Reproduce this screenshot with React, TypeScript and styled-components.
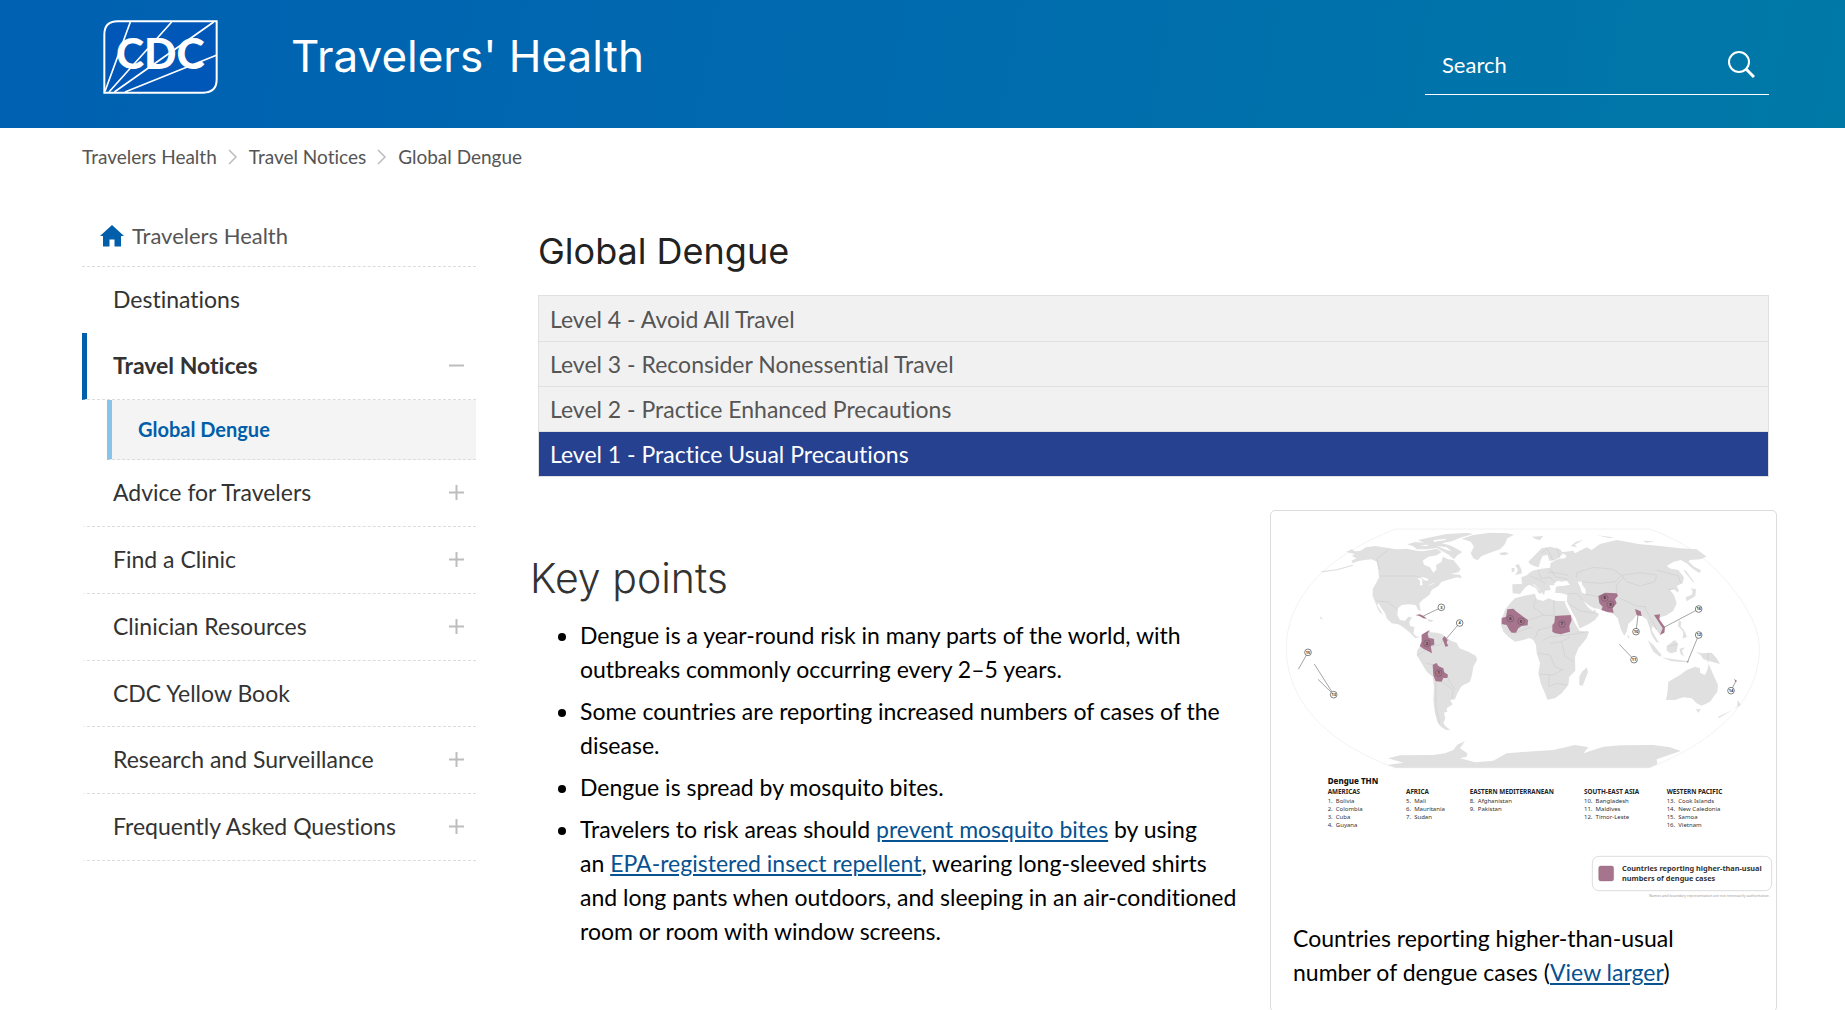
import React from "react";
import styled, { createGlobalStyle } from "styled-components";

const bodyFont = `Lato, "Noto Sans", sans-serif`;
const headFont = `Inter, "Open Sans", sans-serif`;

const GlobalStyle = createGlobalStyle`
  *, *::before, *::after { box-sizing: border-box; }
  body { margin: 0; background: #fff; color: #000; font-family: ${bodyFont}; font-size: 23px; line-height: 34px; font-variant-ligatures: none; }
  button, input { font: inherit; color: inherit; background: none; border: 0; padding: 0; margin: 0; }
  a { color: inherit; text-decoration: none; }
  ul, ol { list-style: none; margin: 0; padding: 0; }
`;

const Header = styled.header`
  display: flex;
  align-items: flex-start;
  height: 128px;
  padding: 20px 76px 0 103px;
  color: #fff;
  background: linear-gradient(100deg, #0060b2 0%, #006bae 50%, #0079a7 100%);
`;
const LogoLink = styled.a`
  display: block;
  width: 115px;
  height: 74px;
  svg { display: block; }
`;
const SiteTitle = styled.a`
  margin-left: 73px;
  font-family: ${headFont};
  font-size: 44px;
  line-height: 72px;
`;
const SearchForm = styled.form`
  display: flex;
  align-items: center;
  width: 344px;
  height: 60px;
  margin: 15px 0 0 auto;
  padding: 0 14px 0 17px;
  border-bottom: 1px solid #fff;
  font-size: 22px;
`;
const SearchInput = styled.input`
  flex: 1;
  min-width: 0;
  outline: 0;
  &::placeholder { color: #fff; opacity: 1; }
`;
const IconButton = styled.button`
  display: flex;
  align-items: center;
  cursor: pointer;
`;

const Crumbs = styled.ol`
  display: flex;
  align-items: center;
  gap: 11px;
  padding: 15px 82px 0;
  font-size: 19px;
  line-height: 28px;
  color: #555;
  li { display: flex; align-items: center; gap: 11px; }
`;

const Page = styled.div`
  display: grid;
  grid-template-columns: 394px minmax(0, 1fr);
  gap: 54px;
  padding: 34px 68px 0 82px;
`;

const HomeLink = styled.a`
  display: flex;
  align-items: center;
  gap: 8px;
  height: 62px;
  padding-left: 18px;
  border-bottom: 1px dashed #dcdcdc;
  color: #555;
  font-size: 22px;
`;
const NavRow = styled.li<{ $active?: boolean; $short?: boolean; $plain?: boolean }>`
  display: flex;
  align-items: center;
  justify-content: space-between;
  height: ${(p) => (p.$short ? 66 : 67)}px;
  padding: 0 12px 2px 26px;
  border-left: 5px solid ${(p) => (p.$active ? "#005eaa" : "transparent")};
  border-bottom: ${(p) => (p.$plain ? "0" : "1px dashed #dcdcdc")};
  color: #333;
  font-weight: ${(p) => (p.$active ? 700 : 400)};
`;
const SubRow = styled.li`
  height: 60px;
  margin-left: 25px;
  padding-left: 26px;
  border-left: 5px solid #88c3ea;
  border-bottom: 1px dashed #dcdcdc;
  background: #f4f4f4;
  color: #005eaa;
  font-size: 20px;
  font-weight: 700;
  line-height: 58px;
`;

const Intro = styled.div`
  padding: 22px 8px 0;
`;
const PageTitle = styled.h1`
  margin: 0 0 20px;
  font-family: ${headFont};
  font-size: 36px;
  font-weight: 400;
  line-height: 48px;
  color: #222;
`;
const Levels = styled.ul`
  padding-top: 1px;
  border: 1px solid #e0e0e0;
  background: #f1f1f1;
`;
const Level = styled.li<{ $current?: boolean }>`
  padding-left: 11px;
  line-height: 44px;
  border-bottom: ${(p) => (p.$current ? "0" : "1px solid #e0e0e0")};
  background: ${(p) => (p.$current ? "#26418f" : "#f1f1f1")};
  color: ${(p) => (p.$current ? "#fff" : "#555")};
`;

const Columns = styled.div`
  display: grid;
  grid-template-columns: minmax(0, 1fr) 507px;
  gap: 24px;
  align-items: start;
  margin-top: 33px;
`;
const KeyPoints = styled.section`
  padding-top: 40px;
`;
const SectionTitle = styled.h2`
  margin: 0 0 12px;
  font-family: ${headFont};
  font-size: 41px;
  font-weight: 300;
  line-height: 56px;
  color: #333;
`;
const Points = styled.ul`
  list-style: disc;
  padding-left: 50px;
  li { margin-bottom: 8px; }
`;
const TextLink = styled.a`
  color: #075290;
  text-decoration: underline;
`;
const MapCard = styled.figure`
  margin: 0;
  border: 1px solid #dcdcdc;
  border-radius: 5px;
  svg { display: block; width: 100%; height: auto; }
`;
const Caption = styled.figcaption`
  padding: 12px 40px 22px 22px;
`;

const Logo = () => (
  <svg width="115" height="74" viewBox="0 0 345 222" role="img" aria-label="CDC">
    <path d="M4 218V44Q4 4 44 4H341V178Q341 218 301 218Z" fill="#0057b8" stroke="#fff" strokeWidth="6" />
    <path d="M6 214L82 6M18 216L206 6M34 216L332 6M66 216L340 106" stroke="#fff" strokeWidth="5" fill="none" />
    <text x="39" y="147" fontFamily="Lato, sans-serif" fontSize="128" fontWeight="900" fill="#fff">CDC</text>
  </svg>
);
const SearchIcon = () => (
  <svg width="27" height="27" viewBox="0 0 27 27" fill="none" stroke="#fff" strokeWidth="2">
    <circle cx="11" cy="11" r="10" />
    <path d="M18 18L26 26" strokeWidth="3" />
  </svg>
);
const Chevron = () => (
  <svg width="10" height="16" viewBox="0 0 10 16" fill="none" stroke="#bdbdbd" strokeWidth="1.5">
    <path d="M1 1L8 8L1 15" />
  </svg>
);
const HomeIcon = () => (
  <svg width="24" height="22" viewBox="0 0 24 22" fill="#005eaa">
    <path d="M12 0L24 11H21V21.500H14.500V14.500H9.500V21.500H3V11H0Z" />
  </svg>
);
const ToggleIcon = ({ open }: { open?: boolean }) => (
  <svg width="15" height="15" viewBox="0 0 15 15" stroke="#bdbdbd" strokeWidth="2">
    <path d={open ? "M0 7.500H15" : "M0 7.500H15M7.500 0V15"} />
  </svg>
);

type Pin = { n: number; x: number; y: number; to?: [number, number][] };
const pins: Pin[] = [
  { n: 3, x: 544, y: 352, to: [[490, 378]] },
  { n: 4, x: 599, y: 399, to: [[560, 445]] },
  { n: 2, x: 501, y: 460 },
  { n: 1, x: 536, y: 549 },
  { n: 15, x: 144, y: 487, to: [[115, 538]] },
  { n: 13, x: 221, y: 614, to: [[163, 522], [174, 568]] },
  { n: 6, x: 751, y: 386 },
  { n: 5, x: 783, y: 394 },
  { n: 7, x: 906, y: 402 },
  { n: 8, x: 1034, y: 324 },
  { n: 9, x: 1051, y: 343 },
  { n: 10, x: 1128, y: 425, to: [[1134, 375]] },
  { n: 16, x: 1316, y: 357, to: [[1212, 412]] },
  { n: 12, x: 1316, y: 435, to: [[1283, 515]] },
  { n: 11, x: 1122, y: 509, to: [[1078, 463]] },
  { n: 14, x: 1413, y: 602, to: [[1428, 572]] },
];
const regions: { x: number; name: string; items: string[] }[] = [
  { x: 170, name: "AMERICAS", items: ["1.  Bolivia", "2.  Colombia", "3.  Cuba", "4.  Guyana"] },
  { x: 405, name: "AFRICA", items: ["5.  Mali", "6.  Mauritania", "7.  Sudan"] },
  { x: 596, name: "EASTERN MEDITERRANEAN", items: ["8.  Afghanistan", "9.  Pakistan"] },
  { x: 939, name: "SOUTH-EAST ASIA", items: ["10.  Bangladesh", "11.  Maldives", "12.  Timor-Leste"] },
  { x: 1187, name: "WESTERN PACIFIC", items: ["13.  Cook Islands", "14.  New Caledonia", "15.  Samoa", "16.  Vietnam"] },
];

const WorldMap = () => (
  <svg viewBox="0 0 1515 1194" role="img" aria-label="World map of dengue cases" fontFamily='"Noto Sans", sans-serif'>
    <g transform="translate(-33 -63)">
      <path
        d="M408 117H1168C1310 165 1390 255 1440 325C1480 385 1498 430 1498 475C1498 610 1400 740 1170 833H405C160 745 79 600 79 475C79 330 190 200 408 117Z"
        fill="none" stroke="#ececec" strokeWidth="2"
      />
      <g fill="#e0e0e0">
        <path d="M258 186L275 178L285 184L300 183L318 172L345 168L385 174L410 178L440 176L470 182L490 184L510 180L530 176L545 186L530 196L505 200L488 212L492 224L510 232L520 248L530 238L528 225L545 215L548 200L565 208L580 210L590 222L602 238L595 247L572 252L600 254L606 265L590 262L570 268L545 275L535 288L515 300L508 315L490 328L478 340L482 362L474 360L468 346L450 343L425 345L414 355L412 375L420 390L435 392L445 380L456 382L448 396L450 408L464 411L460 430L470 440L484 440L466 445L450 428L430 412L415 403L395 400L380 385L375 370L362 350L354 338L352 346L362 363L369 374L358 366L350 348L345 335L338 318L338 298L348 280L357 262L355 240L350 215L335 208L315 210L295 213L278 220L274 212L290 205L276 198L284 192Z" />
        <path d="M442 163L465 156L492 158L474 150L520 140L560 132L620 129L640 132L605 142L575 154L545 160L570 166L586 174L607 186L592 196L582 208L566 194L548 184L530 174L500 178L470 178L462 170Z" />
        <path d="M605 146L640 135L690 128L742 130L762 134L742 145L735 162L720 178L690 188L665 198L652 211L640 205L632 190L642 170L632 155Z" />
        <path d="M718 189L735 186L747 190L735 196L722 195ZM503 388L520 391L515 396L505 394ZM178 378L188 385L184 389Z" />
        <path d="M180 244L230 238L278 224L280 227L232 241L190 247Z" />
        <path d="M485 435L495 428L508 420L512 427L530 428L545 432L555 440L575 453L590 458L598 475L625 485L648 498L651 510L640 530L636 555L630 575L605 588L592 610L585 628L570 630L578 643L560 655L562 665L552 668L556 685L550 700L560 712L571 719L558 720L543 710L532 695L525 670L520 630L522 590L518 560L500 545L485 520L470 495L472 480L482 468L485 450Z" />
        <path d="M765 325L790 318L825 311L830 328L850 333L865 325L885 332L915 334L920 350L935 375L945 400L958 422L987 425L980 445L955 475L945 500L946 542L928 560L925 585L905 610L885 625L862 629L855 610L842 580L835 550L840 520L830 490L828 465L820 450L808 444L790 450L765 455L745 440L730 425L723 405L726 385L735 360L750 340Z" />
        <path d="M980 532L984 546L968 587L958 585L958 560L966 545Z" />
        <path d="M757 283L786 282L784 262L800 256L812 245L825 240L845 236L870 233L872 218L895 207L915 205L920 198L905 187L940 182L945 190L980 172L995 180L1020 162L1070 150L1115 158L1135 162L1200 168L1260 175L1310 178L1340 200L1320 208L1290 210L1285 214L1302 230L1322 240L1320 250L1300 238L1280 220L1262 210L1240 216L1220 228L1232 236L1255 240L1272 262L1268 280L1250 288L1256 300L1254 308L1242 298L1230 300L1242 315L1250 340L1240 362L1220 376L1200 382L1195 392L1210 410L1214 425L1200 435L1190 420L1178 408L1175 420L1186 440L1198 458L1188 455L1175 435L1168 410L1160 388L1145 378L1132 372L1120 388L1105 402L1100 425L1093 437L1083 420L1073 385L1060 372L1042 366L1020 358L1003 354L1008 366L1018 373L1005 390L985 403L960 415L952 410L945 390L930 360L920 337L922 315L905 310L885 308L888 290L905 286L868 286L872 300L855 302L852 316L842 302L824 284L816 280L838 300L850 304L838 312L828 295L808 284L796 292L780 312L758 310Z" />
        <path d="M805 215L825 195L845 175L870 170L900 178L910 190L895 205L880 212L858 214L852 206L862 194L848 198L842 210L836 232L822 228L810 222Z" />
        <path d="M766 256L786 250L784 238L776 222L766 226L774 240ZM755 234L764 234L762 246L755 245Z" />
        <path d="M815 140L850 138L840 150L828 148ZM932 168L948 155L970 150L944 164L952 172ZM1010 136L1060 142L1050 145ZM1148 152L1185 154L1160 158Z" />
        <path d="M1270 240L1278 242L1304 278L1298 275ZM1292 295L1308 298L1306 318L1280 334L1277 322L1296 314L1298 302Z" />
        <path d="M1163 450L1180 465L1205 495L1200 500L1180 485ZM1205 502L1240 508L1282 513L1280 517L1235 514ZM1220 468L1245 450L1254 462L1250 485L1232 490L1220 482ZM1258 476L1276 472L1266 482L1272 500L1262 492ZM1306 485L1325 490L1355 488L1370 505L1380 522L1355 515L1330 508L1322 495ZM1256 390L1264 396L1262 410L1272 420L1281 440L1268 446L1270 425L1254 408ZM1101 434L1109 440L1105 447Z" />
        <path d="M1225 575L1260 555L1280 540L1305 530L1320 535L1320 548L1335 555L1342 540L1346 522L1358 550L1374 585L1372 605L1350 635L1325 647L1310 640L1295 625L1270 622L1245 630L1218 630L1222 610ZM1308 658L1322 657L1315 669ZM1433 630L1443 645L1420 658L1432 648ZM1418 660L1377 684L1374 680Z" />
        <path d="M408 833L382 825L430 818L384 805L420 796L520 795L555 790L580 780L592 764L615 753L600 775L622 790L620 800L600 805L645 817L700 812L740 790L800 785L880 780L945 765L985 772L970 790L1030 770L1080 766L1180 765L1230 772L1262 783L1190 808L1192 822L1168 833Z" />
      </g>
      <g fill="#fff">
        <path d="M882 282L892 272L905 275L920 272L930 284L908 288L886 289Z" />
        <path d="M953 276L966 272L966 284L976 296L978 312L966 308L960 290Z" />
        <path d="M970 332L986 346L1006 357L998 364L984 352Z" />
        <path d="M472 264L490 262L506 268L500 274L486 270L488 286L480 286L480 272ZM500 288L522 278L520 282Z" />
        <path d="M852 206L862 194L868 212L884 212L866 220L862 230L846 232Z" />
        <path d="M914 337L922 337L932 358L947 385L958 413L952 412L938 385L928 365Z" />
        <path d="M520 150L560 146L556 150L522 156ZM530 168L560 172L575 184L560 180ZM480 166L505 164L500 169Z" />
      </g>
      <g fill="none" stroke="#c9c9c9" strokeWidth="1.500">
        <path d="M387 176L350 208L360 240M360 258H470L500 275M350 333L385 336L412 358" />
        <path d="M510 470L540 465L550 448M472 496L495 482M498 520L518 524M545 575L580 600L575 628M528 578L528 650L540 705M560 556L572 580L585 598" />
        <path d="M828 326L820 350L850 375L880 378M882 330V378H934M804 392L850 375M825 445L835 420L875 410M765 430L790 420L815 410M870 460L905 455L930 440M835 490L870 495L885 530L910 540M838 552L880 555L905 540M868 555L866 590L890 580L920 585M905 455L915 500L940 515M850 450L870 440L925 435L985 425" />
        <path d="M835 240L842 265L870 262L882 275M812 258L835 268L856 280M870 235L885 260L925 268M862 246L900 250L925 256M845 190L860 176L872 196L878 210M890 172L900 205" />
        <path d="M950 262L950 248L1000 232L1060 238L1085 256L1065 275L1020 280L960 275M1085 256L1140 248L1190 255L1185 275L1140 288L1100 275ZM1190 240L1255 258L1262 280M1072 312L1068 285L1092 262M1080 325L1130 348L1160 350M975 312L1015 320M925 312L950 310L968 330M925 340L958 362L1005 370M1152 350L1170 380L1182 400L1190 420" />
        <path d="M1344 488V518M1225 470L1252 462M1222 300L1244 296" />
      </g>
      <g fill="#a6758d">
        <path d="M466 375L480 373L492 379L501 386L490 385L478 378Z" />
        <path d="M485 434L497 427L508 421L503 432L506 443L522 447L523 464L512 468L516 490L505 484L490 476L479 468L485 455Z" />
        <path d="M547 446L554 438L563 450L560 458L565 468L556 470L552 458Z" />
        <path d="M518 524L530 519L535 528L550 535L553 547L564 554L562 564L550 564L545 575L527 574L520 556Z" />
        <path d="M742 358L760 356L770 365L790 380L804 390L803 406L785 408L775 415L768 428L755 428L748 420L740 405L725 402L725 384L738 380Z" />
        <path d="M885 378L932 375L935 390L928 408L930 425L918 428L902 433L885 430L877 425L877 405L883 398Z" />
        <path d="M1015 318L1035 308L1070 310L1074 317L1065 328L1070 340L1058 355L1061 368L1042 366L1024 360L1028 350L1018 340Z" />
        <path d="M1125 357L1142 364L1145 378L1130 376ZM1182 375L1200 373L1198 388L1215 412L1213 428L1200 435L1208 415L1192 390ZM1279 515L1287 513L1283 518ZM1422 566L1431 573L1427 577Z" />
      </g>
      {pins.map((p) => (
        <g key={p.n}>
          {(p.to || []).map(([x, y]) => (
            <line key={x} x1={p.x} y1={p.y} x2={x} y2={y} stroke="#777" strokeWidth="2" />
          ))}
          <circle cx={p.x} cy={p.y} r="10" fill={p.to ? "#fff" : "none"} stroke="#444" strokeWidth={p.to ? 2 : 1} />
          <text x={p.x} y={p.y + 4} fontSize="12" fontWeight="700" textAnchor="middle" fill="#333">{p.n}</text>
        </g>
      ))}
    </g>
    <text x="170" y="820" fontSize="24" fontWeight="800" fill="#111">Dengue THN</text>
    {regions.map((r) => (
      <g key={r.name}>
        <text x={r.x} y="850" fontSize="19" fontWeight="700" fill="#222">{r.name}</text>
        {r.items.map((t, i) => (
          <text key={t} x={r.x} y={876 + i * 24} fontSize="18" fill="#333" style={{ whiteSpace: "pre" }}>{t}</text>
        ))}
      </g>
    ))}
    <rect x="964" y="1036" width="538" height="103" rx="20" fill="#fff" stroke="#ccc" strokeWidth="2" />
    <rect x="983" y="1065" width="45" height="45" rx="6" fill="#a6758d" stroke="#8f6479" />
    <text fontSize="22" fontWeight="700" fill="#333">
      <tspan x="1053" y="1081">Countries reporting higher-than-usual</tspan>
      <tspan x="1053" y="1110">numbers of dengue cases</tspan>
    </text>
    <text x="1496" y="1158" fontSize="11" textAnchor="end" fill="#999">Names and boundary representation are not necessarily authoritative.</text>
  </svg>
);

const navItems = [
  { label: "Advice for Travelers", toggle: true },
  { label: "Find a Clinic", toggle: true },
  { label: "Clinician Resources", toggle: true },
  { label: "CDC Yellow Book", toggle: false },
  { label: "Research and Surveillance", toggle: true },
  { label: "Frequently Asked Questions", toggle: true },
];

export default function App() {
  return (
    <>
      <GlobalStyle />
      <Header>
        <LogoLink href="#" aria-label="CDC"><Logo /></LogoLink>
        <SiteTitle href="#">Travelers' Health</SiteTitle>
        <SearchForm role="search">
          <SearchInput type="text" placeholder="Search" aria-label="Search" />
          <IconButton type="submit" aria-label="Submit search"><SearchIcon /></IconButton>
        </SearchForm>
      </Header>
      <nav aria-label="Breadcrumb">
        <Crumbs>
          <li><a href="#">Travelers Health</a><Chevron /></li>
          <li><a href="#">Travel Notices</a><Chevron /></li>
          <li>Global Dengue</li>
        </Crumbs>
      </nav>
      <Page>
        <nav aria-label="Section">
          <HomeLink href="#"><HomeIcon />Travelers Health</HomeLink>
          <ul>
            <NavRow $short $plain><a href="#">Destinations</a></NavRow>
            <NavRow $active>
              <a href="#">Travel Notices</a>
              <IconButton type="button" aria-label="Collapse Travel Notices"><ToggleIcon open /></IconButton>
            </NavRow>
            <SubRow><a href="#">Global Dengue</a></SubRow>
            {navItems.map((n) => (
              <NavRow key={n.label} $short={!n.toggle}>
                <a href="#">{n.label}</a>
                {n.toggle && (
                  <IconButton type="button" aria-label={`Expand ${n.label}`}><ToggleIcon /></IconButton>
                )}
              </NavRow>
            ))}
          </ul>
        </nav>
        <main>
          <Intro>
            <PageTitle>Global Dengue</PageTitle>
            <Levels>
              <Level>Level 4 - Avoid All Travel</Level>
              <Level>Level 3 - Reconsider Nonessential Travel</Level>
              <Level>Level 2 - Practice Enhanced Precautions</Level>
              <Level $current>Level 1 - Practice Usual Precautions</Level>
            </Levels>
          </Intro>
          <Columns>
            <KeyPoints>
              <SectionTitle>Key points</SectionTitle>
              <Points>
                <li>Dengue is a year-round risk in many parts of the world, with outbreaks commonly occurring every 2–5 years.</li>
                <li>Some countries are reporting increased numbers of cases of the disease.</li>
                <li>Dengue is spread by mosquito bites.</li>
                <li>
                  Travelers to risk areas should <TextLink href="#">prevent mosquito bites</TextLink> by using
                  an&nbsp;<TextLink href="#">EPA-registered insect repellent</TextLink>, wearing long-sleeved shirts and long
                  pants when outdoors, and sleeping in an air-conditioned room or room with window screens.
                </li>
              </Points>
            </KeyPoints>
            <MapCard>
              <WorldMap />
              <Caption>
                Countries reporting higher-than-usual number of dengue cases (<TextLink href="#">View larger</TextLink>)
              </Caption>
            </MapCard>
          </Columns>
        </main>
      </Page>
    </>
  );
}
